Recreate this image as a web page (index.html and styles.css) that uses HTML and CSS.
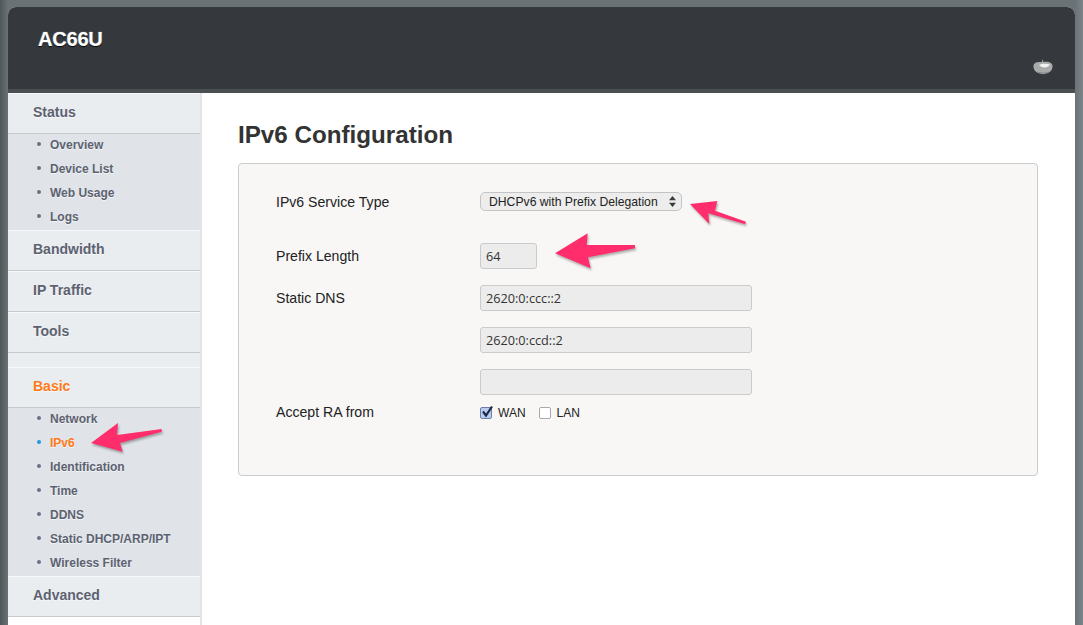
FILE: index.html
```html
<!DOCTYPE html>
<html lang="en">
<head>
<meta charset="utf-8">
<title>IPv6 Configuration</title>
<link rel="stylesheet" href="styles.css">
</head>
<body>
<div class="page">
  <header class="top">
    <div class="brand">AC66U</div>
    <svg class="tomato" width="20" height="16" viewBox="0 0 20 16"><path d="M1 5 C3 2.500 7 3 9 3 L9.500 0 L10.500 3 C13 2.500 17 2.500 19 5 C20.500 8 19 12 15 14 C12 15.500 8 15.500 5 14 C1 12 -0.500 8 1 5Z" fill="#a9abab"/><path d="M6 6 C9 4.500 13 4.500 17 5.500 C15 9 9 9.500 6 6Z" fill="#f1f1f1"/><path d="M4 12.500 C8 14 13 14 16 12.500 C13 15.500 7 15.500 4 12.500Z" fill="#7f8282"/></svg>
  </header>
  <div class="body">
    <nav class="side">
      <div class="sec">Status</div>
      <ul class="sub">
        <li>Overview</li><li>Device List</li><li>Web Usage</li><li>Logs</li>
      </ul>
      <div class="sec">Bandwidth</div>
      <div class="sec">IP Traffic</div>
      <div class="sec">Tools</div>
      <div class="spacer"></div>
      <div class="sec on">Basic</div>
      <ul class="sub">
        <li>Network</li><li class="on">IPv6</li><li>Identification</li><li>Time</li><li>DDNS</li><li>Static DHCP/ARP/IPT</li><li>Wireless Filter</li>
      </ul>
      <div class="sec">Advanced</div>
    </nav>
    <main class="main">
      <h1 class="title">IPv6 Configuration</h1>
      <form class="panel">
        <div class="row row-type"><label class="lbl">IPv6 Service Type</label>
          <div class="select"><span>DHCPv6 with Prefix Delegation</span><svg width="7" height="11" viewBox="0 0 7 11"><path d="M3.500 0 L7 4.300 H0Z M0 6.700 H7 L3.500 11Z" fill="#3c3c3c"/></svg></div>
        </div>
        <div class="row row-prefix"><label class="lbl">Prefix Length</label><div class="inp short">64</div></div>
        <div class="row row-dns"><label class="lbl">Static DNS</label><div class="inp">2620:0:ccc::2</div></div>
        <div class="row row-dns"><label class="lbl"></label><div class="inp">2620:0:ccd::2</div></div>
        <div class="row row-dns last"><label class="lbl"></label><div class="inp"></div></div>
        <div class="row row-ra"><label class="lbl">Accept RA from</label>
          <div class="checks">
            <span class="box checked"><svg width="14" height="14" viewBox="0 0 14 14"><path d="M3 6.500 L6 10.500 L12 1.500" fill="none" stroke="#1d2a44" stroke-width="2.200"/></svg></span><span class="ck">WAN</span>
            <span class="box"></span><span class="ck">LAN</span>
          </div>
        </div>
      </form>
    </main>
  </div>
  <svg class="arrow a1" width="74" height="32" viewBox="0 0 74 32"><path d="M1 21 L28 1 L27 13 L71.700 7 L71.700 9.700 L30 21 L32.700 29.700Z" fill="#ff2d6b"/></svg>
  <svg class="arrow a2" width="84" height="38" viewBox="0 0 84 38"><path d="M1 21.300 L33.700 1.300 L32.700 13 L81 13 L81 16.300 L34 25.300 L36.700 36.300Z" fill="#ff2d6b"/></svg>
  <svg class="arrow a3" width="60" height="28" viewBox="0 0 60 28"><path d="M1 5 L28.300 2 L26 11.700 L57 22.700 L56 25.300 L19.300 14.300 L20.300 25Z" fill="#ff2d6b"/></svg>
</div>
</body>
</html>
```
FILE: styles.css
```css
html, body { margin: 0; height: 100%; }
body {
  height: 625px;
  overflow: hidden;
  background: linear-gradient(90deg, #4f5659 0, #6a7276 8px, #6a7276 1075px, #7b8589 1083px);
  font-family: "Liberation Sans", Arial, sans-serif;
  padding: 7px 8px 0;
  box-sizing: border-box;
}
.page { position: relative; height: 618px; overflow: hidden; border-radius: 8px 8px 0 0; background: #fff; }
.top {
  height: 82px;
  background: #35393d;
  border-bottom: 4px solid #4a4f52;
  position: relative;
}
.brand {
  padding: 20px 0 0 30px;
  font-size: 20px;
  line-height: 24px;
  font-weight: bold;
  color: #fff;
  letter-spacing: -0.2px;
  text-shadow: 0 1px 1px #000, 0 0 1px #fff;
}
.tomato { position: absolute; right: 22px; top: 52px; }
.body { display: flex; height: 532px; }
.side { width: 192px; background: #fff; border-right: 2px solid #e2e5e8; flex: none; }
.sec {
  height: 39px;
  line-height: 36px;
  padding-left: 25px;
  background: #eaedf0;
  border-top: 1px solid #f7f8f9;
  border-bottom: 1px solid #c6cacd;
  font-size: 14px;
  font-weight: bold;
  color: #5d6271;
  text-shadow: 0 1px 0 rgba(255,255,255,.6);
}
.sec.on { color: #ff7a1a; }
.spacer { height: 14px; background: #eaedf0; }
.sub {
  list-style: none;
  margin: 0;
  padding: 0;
  background: #e0e4e8;
}
.sub li {
  height: 24px;
  line-height: 22px;
  padding-left: 42px;
  font-size: 12px;
  font-weight: bold;
  color: #5d6271;
  text-shadow: 0 1px 0 rgba(255,255,255,.6);
  position: relative;
}
.sub li::before {
  content: "";
  position: absolute;
  left: 29px;
  top: 8px;
  width: 4px;
  height: 4px;
  border-radius: 50%;
  background: #6a7183;
}
.sub li.on { color: #ff7a1a; }
.sub li.on::before { background: #1e96e6; }
.main { flex: 1; padding: 0 37px 0 36px; background: #fff; }
.title {
  margin: 28px 0 0;
  font-size: 24.200px;
  line-height: 28px;
  font-weight: bold;
  color: #333;
}
.panel {
  margin-top: 14px;
  height: 313px;
  box-sizing: border-box;
  background: #f8f7f6;
  border: 1px solid #cccccc;
  border-radius: 4px;
  padding: 24px 0 0 37px;
}
.row { display: flex; align-items: flex-start; }
.lbl { width: 204px; flex: none; font-size: 14.100px; line-height: 28px; color: #222; }
.row-type { height: 55px; }
.row-prefix { height: 42px; }
.row-prefix .lbl { line-height: 26px; }
.row-dns { height: 42px; }
.row-dns .lbl { line-height: 26px; }
.row-dns.last { height: 29px; }
.row-ra { height: 30px; }
.row-ra .lbl { line-height: 29px; }
.select {
  width: 202px;
  height: 19px;
  margin-top: 4px;
  box-sizing: border-box;
  border: 1px solid #c4c4c4;
  border-radius: 5px;
  background: #ededed;
  display: flex;
  align-items: center;
  justify-content: space-between;
  padding: 0 5px 0 8px;
  font-size: 12.200px;
  color: #222;
}
.inp {
  width: 272px;
  height: 26px;
  box-sizing: border-box;
  background: #ececec;
  border: 1px solid #cbcbcb;
  border-radius: 3px;
  font-family: "Open Sans", "Noto Sans", sans-serif;
  font-size: 12.700px;
  line-height: 24px;
  padding-left: 5px;
  color: #333;
}
.inp.short { width: 57px; }
.checks { display: flex; align-items: center; height: 29px; font-size: 12px; color: #222; }
.box {
  width: 12px;
  height: 12px;
  box-sizing: border-box;
  border: 1px solid #a9a9a9;
  border-radius: 2px;
  background: #fff;
  position: relative;
}
.box.checked { background: #b9cdf0; border-color: #6d7fa8; }
.box svg { position: absolute; left: -1px; top: -3px; }
.ck { margin: 0 13px 0 6px; }
.arrow { position: absolute; filter: drop-shadow(1px 2px 1px rgba(0,0,0,.3)); }
.a1 { left: 82px; top: 415px; }
.a2 { left: 546px; top: 225px; }
.a3 { left: 681px; top: 192px; }
```
